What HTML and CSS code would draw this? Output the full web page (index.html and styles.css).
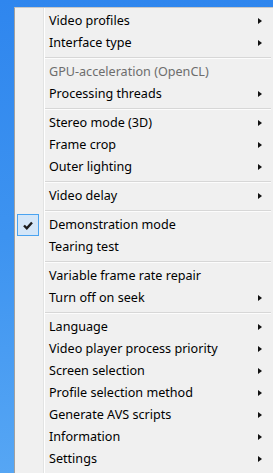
FILE: index.html
```html
<!DOCTYPE html>
<html>
<head>
<meta charset="utf-8">
<link rel="stylesheet" href="styles.css">
</head>
<body>
<div class="menu">
  <div class="item"><span class="icon"></span><span class="label">Video profiles</span><span class="arrow"></span></div>
  <div class="item"><span class="icon"></span><span class="label">Interface type</span><span class="arrow"></span></div>
  <div class="sep"></div>
  <div class="item disabled"><span class="icon"></span><span class="label">GPU-acceleration (OpenCL)</span></div>
  <div class="item"><span class="icon"></span><span class="label">Processing threads</span><span class="arrow"></span></div>
  <div class="sep"></div>
  <div class="item"><span class="icon"></span><span class="label">Stereo mode (3D)</span><span class="arrow"></span></div>
  <div class="item"><span class="icon"></span><span class="label">Frame crop</span><span class="arrow"></span></div>
  <div class="item"><span class="icon"></span><span class="label">Outer lighting</span><span class="arrow"></span></div>
  <div class="sep"></div>
  <div class="item"><span class="icon"></span><span class="label">Video delay</span><span class="arrow"></span></div>
  <div class="sep"></div>
  <div class="item"><span class="icon checked"><svg width="10" height="9" viewBox="0 0 10 9"><path d="M1 4.5 L3.8 7.3 L9 1.5" fill="none" stroke="#1c1c1c" stroke-width="2.4"/></svg></span><span class="label">Demonstration mode</span></div>
  <div class="item"><span class="icon"></span><span class="label">Tearing test</span></div>
  <div class="sep"></div>
  <div class="item"><span class="icon"></span><span class="label">Variable frame rate repair</span></div>
  <div class="item"><span class="icon"></span><span class="label">Turn off on seek</span><span class="arrow"></span></div>
  <div class="sep"></div>
  <div class="item"><span class="icon"></span><span class="label">Language</span><span class="arrow"></span></div>
  <div class="item"><span class="icon"></span><span class="label">Video player process priority</span><span class="arrow"></span></div>
  <div class="item"><span class="icon"></span><span class="label">Screen selection</span><span class="arrow"></span></div>
  <div class="item"><span class="icon"></span><span class="label">Profile selection method</span><span class="arrow"></span></div>
  <div class="item"><span class="icon"></span><span class="label">Generate AVS scripts</span><span class="arrow"></span></div>
  <div class="item"><span class="icon"></span><span class="label">Information</span><span class="arrow"></span></div>
  <div class="item"><span class="icon"></span><span class="label">Settings</span><span class="arrow"></span></div>
</div>
</body>
</html>
```
FILE: styles.css
```css
html, body {
  margin: 0;
  padding: 0;
}
body {
  width: 273px;
  height: 473px;
  overflow: hidden;
  background: linear-gradient(180deg, #2f86ee 0%, #3d93f0 50%, #56a6f4 100%);
  font-family: "Noto Sans", "Open Sans", sans-serif;
  font-size: 12.6px;
  color: #000;
}
.menu {
  margin: 7px 0 0 14px;
  border-left: 1px solid #a0a0a0;
  border-top: 1px solid #c8c8c8;
  padding: 2px 0 4px 0;
  height: 470px;
  box-sizing: border-box;
  background: linear-gradient(90deg, #f0f0f0 0, #f0f0f0 28px, #e2e3e3 28px, #e2e3e3 29px, #ffffff 29px, #ffffff 30px, #f0f0f0 30px);
}
.item {
  display: flex;
  align-items: center;
  height: 22px;
  padding-left: 2px;
  padding-right: 11px;
}
.icon {
  width: 22px;
  height: 22px;
  flex: none;
  box-sizing: border-box;
  display: flex;
  align-items: center;
  justify-content: center;
}
.icon.checked {
  background: #d4e6f8;
  border: 1px solid #4aa3f0;
}
.label {
  flex: 1;
  padding-left: 10px;
  white-space: nowrap;
  line-height: 22px;
}
.disabled .label {
  color: #6d6d6d;
}
.arrow {
  flex: none;
  width: 0;
  height: 0;
  border-left: 4px solid #111;
  border-top: 3.5px solid transparent;
  border-bottom: 3.5px solid transparent;
}
.sep {
  height: 7px;
  margin-left: 30px;
  margin-right: 2px;
  display: flex;
  flex-direction: column;
  justify-content: center;
}
.sep::before {
  content: "";
  display: block;
  height: 1px;
  background: #d7d7d7;
  border-bottom: 1px solid #fcfcfc;
}
```
